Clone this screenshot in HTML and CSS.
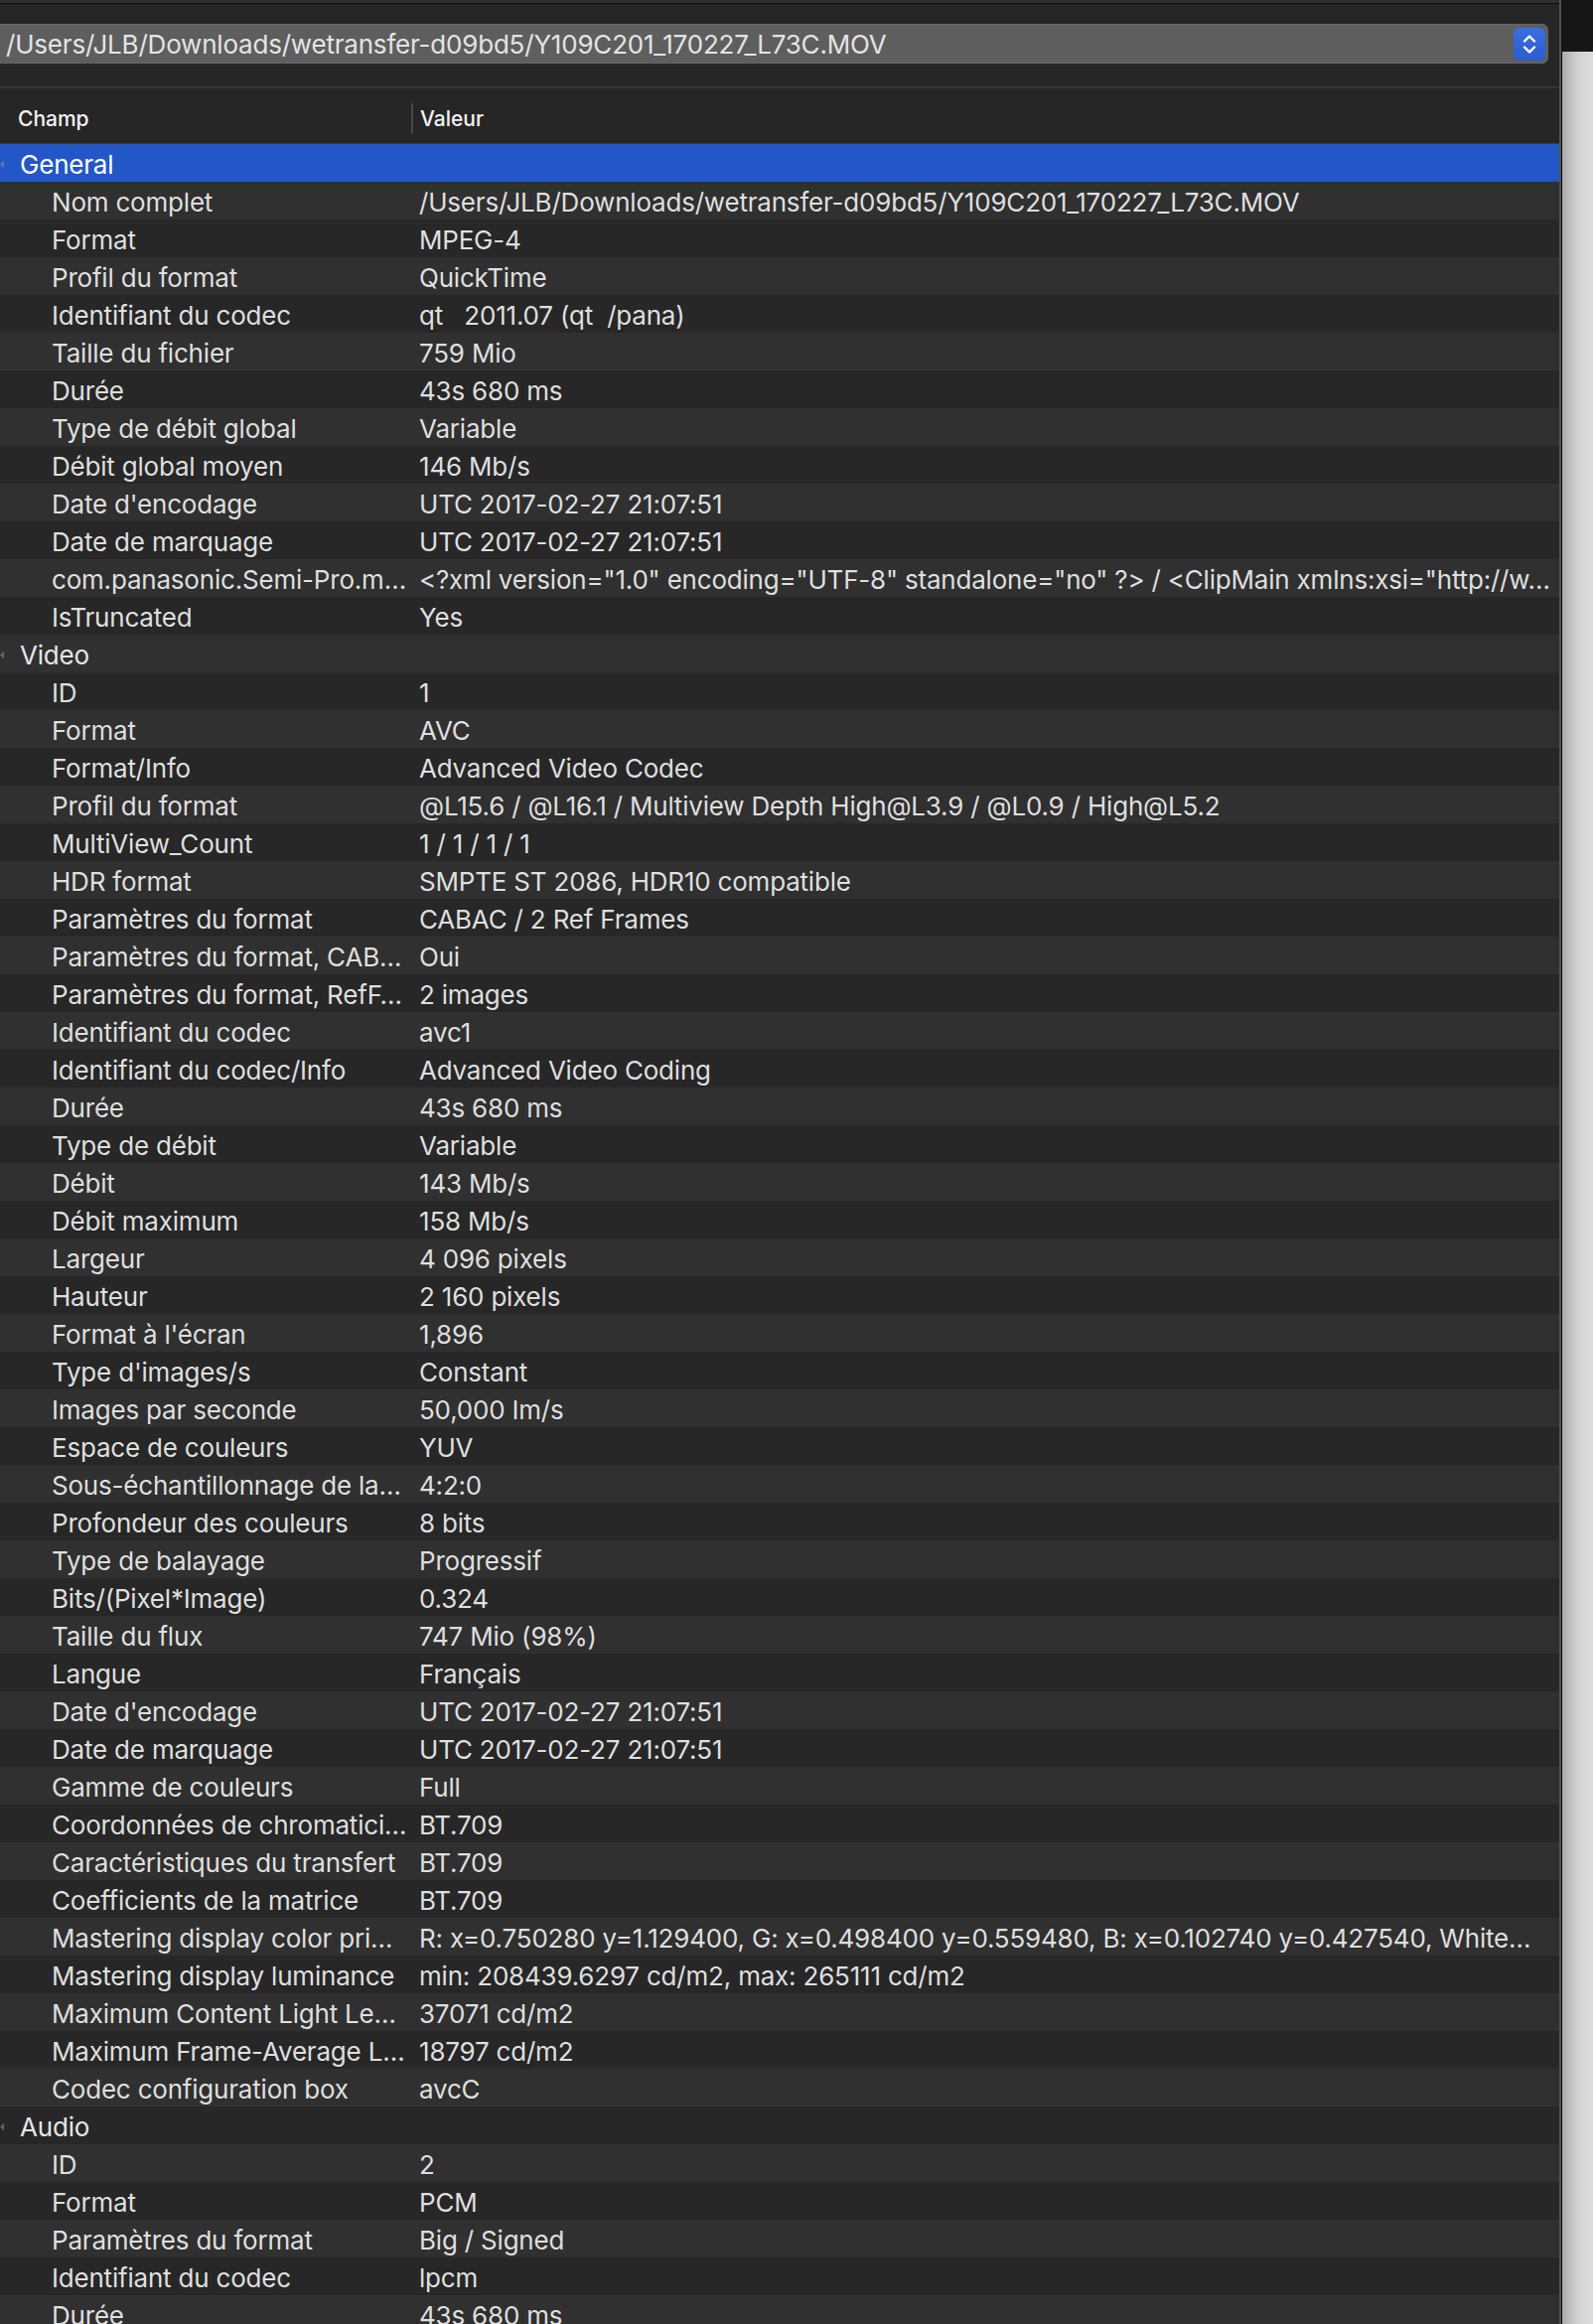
FILE: index.html
```html
<!DOCTYPE html>
<html lang="fr">
<head>
<meta charset="utf-8">
<title>MediaInfo</title>
<link rel="stylesheet" href="styles.css">
</head>
<body>
<div class="window">
  <div class="main">
    <div class="topstrip"></div>
    <div class="toolbar">
      <div class="popup">
        <span class="popup-text">/Users/JLB/Downloads/wetransfer-d09bd5/Y109C201_170227_L73C.MOV</span>
        <span class="stepper">
          <svg width="32" height="33" viewBox="0 0 32 33"><path d="M11 13.5 L16 8.5 L21 13.5" fill="none" stroke="#fff" stroke-width="2.4" stroke-linecap="round" stroke-linejoin="round"/><path d="M11 19.5 L16 24.5 L21 19.5" fill="none" stroke="#fff" stroke-width="2.4" stroke-linecap="round" stroke-linejoin="round"/></svg>
        </span>
      </div>
    </div>
    <div class="header">
      <div class="hcell hfield">Champ</div>
      <div class="hcell hvalue">Valeur</div>
    </div>
    <div class="rows">
      <div class="row group selected"><span class="tri"></span><span class="gname">General</span></div>
      <div class="row"><span class="f">Nom complet</span><span class="v">/Users/JLB/Downloads/wetransfer-d09bd5/Y109C201_170227_L73C.MOV</span></div>
      <div class="row"><span class="f">Format</span><span class="v">MPEG-4</span></div>
      <div class="row"><span class="f">Profil du format</span><span class="v">QuickTime</span></div>
      <div class="row"><span class="f">Identifiant du codec</span><span class="v">qt   2011.07 (qt  /pana)</span></div>
      <div class="row"><span class="f">Taille du fichier</span><span class="v">759 Mio</span></div>
      <div class="row"><span class="f">Durée</span><span class="v">43s 680 ms</span></div>
      <div class="row"><span class="f">Type de débit global</span><span class="v">Variable</span></div>
      <div class="row"><span class="f">Débit global moyen</span><span class="v">146 Mb/s</span></div>
      <div class="row"><span class="f">Date d'encodage</span><span class="v">UTC 2017-02-27 21:07:51</span></div>
      <div class="row"><span class="f">Date de marquage</span><span class="v">UTC 2017-02-27 21:07:51</span></div>
      <div class="row"><span class="f">com.panasonic.Semi-Pro.m…</span><span class="v">&lt;?xml version="1.0" encoding="UTF-8" standalone="no" ?&gt; / &lt;ClipMain xmlns:xsi="http://w…</span></div>
      <div class="row"><span class="f">IsTruncated</span><span class="v">Yes</span></div>
      <div class="row group"><span class="tri"></span><span class="gname">Video</span></div>
      <div class="row"><span class="f">ID</span><span class="v">1</span></div>
      <div class="row"><span class="f">Format</span><span class="v">AVC</span></div>
      <div class="row"><span class="f">Format/Info</span><span class="v">Advanced Video Codec</span></div>
      <div class="row"><span class="f">Profil du format</span><span class="v">@L15.6 / @L16.1 / Multiview Depth High@L3.9 / @L0.9 / High@L5.2</span></div>
      <div class="row"><span class="f">MultiView_Count</span><span class="v">1 / 1 / 1 / 1</span></div>
      <div class="row"><span class="f">HDR format</span><span class="v">SMPTE ST 2086, HDR10 compatible</span></div>
      <div class="row"><span class="f">Paramètres du format</span><span class="v">CABAC / 2 Ref Frames</span></div>
      <div class="row"><span class="f">Paramètres du format, CAB…</span><span class="v">Oui</span></div>
      <div class="row"><span class="f">Paramètres du format, RefF…</span><span class="v">2 images</span></div>
      <div class="row"><span class="f">Identifiant du codec</span><span class="v">avc1</span></div>
      <div class="row"><span class="f">Identifiant du codec/Info</span><span class="v">Advanced Video Coding</span></div>
      <div class="row"><span class="f">Durée</span><span class="v">43s 680 ms</span></div>
      <div class="row"><span class="f">Type de débit</span><span class="v">Variable</span></div>
      <div class="row"><span class="f">Débit</span><span class="v">143 Mb/s</span></div>
      <div class="row"><span class="f">Débit maximum</span><span class="v">158 Mb/s</span></div>
      <div class="row"><span class="f">Largeur</span><span class="v">4 096 pixels</span></div>
      <div class="row"><span class="f">Hauteur</span><span class="v">2 160 pixels</span></div>
      <div class="row"><span class="f">Format à l'écran</span><span class="v">1,896</span></div>
      <div class="row"><span class="f">Type d'images/s</span><span class="v">Constant</span></div>
      <div class="row"><span class="f">Images par seconde</span><span class="v">50,000 Im/s</span></div>
      <div class="row"><span class="f">Espace de couleurs</span><span class="v">YUV</span></div>
      <div class="row"><span class="f">Sous-échantillonnage de la…</span><span class="v">4:2:0</span></div>
      <div class="row"><span class="f">Profondeur des couleurs</span><span class="v">8 bits</span></div>
      <div class="row"><span class="f">Type de balayage</span><span class="v">Progressif</span></div>
      <div class="row"><span class="f">Bits/(Pixel*Image)</span><span class="v">0.324</span></div>
      <div class="row"><span class="f">Taille du flux</span><span class="v">747 Mio (98%)</span></div>
      <div class="row"><span class="f">Langue</span><span class="v">Français</span></div>
      <div class="row"><span class="f">Date d'encodage</span><span class="v">UTC 2017-02-27 21:07:51</span></div>
      <div class="row"><span class="f">Date de marquage</span><span class="v">UTC 2017-02-27 21:07:51</span></div>
      <div class="row"><span class="f">Gamme de couleurs</span><span class="v">Full</span></div>
      <div class="row"><span class="f">Coordonnées de chromatici…</span><span class="v">BT.709</span></div>
      <div class="row"><span class="f">Caractéristiques du transfert</span><span class="v">BT.709</span></div>
      <div class="row"><span class="f">Coefficients de la matrice</span><span class="v">BT.709</span></div>
      <div class="row"><span class="f">Mastering display color pri…</span><span class="v">R: x=0.750280 y=1.129400, G: x=0.498400 y=0.559480, B: x=0.102740 y=0.427540, White…</span></div>
      <div class="row"><span class="f">Mastering display luminance</span><span class="v">min: 208439.6297 cd/m2, max: 265111 cd/m2</span></div>
      <div class="row"><span class="f">Maximum Content Light Le…</span><span class="v">37071 cd/m2</span></div>
      <div class="row"><span class="f">Maximum Frame-Average L…</span><span class="v">18797 cd/m2</span></div>
      <div class="row"><span class="f">Codec configuration box</span><span class="v">avcC</span></div>
      <div class="row group"><span class="tri"></span><span class="gname">Audio</span></div>
      <div class="row"><span class="f">ID</span><span class="v">2</span></div>
      <div class="row"><span class="f">Format</span><span class="v">PCM</span></div>
      <div class="row"><span class="f">Paramètres du format</span><span class="v">Big / Signed</span></div>
      <div class="row"><span class="f">Identifiant du codec</span><span class="v">lpcm</span></div>
      <div class="row"><span class="f">Durée</span><span class="v">43s 680 ms</span></div>
    </div>
  </div>
  <div class="edge">
    <div class="edge-top"></div>
    <div class="edge-body"></div>
  </div>
</div>
</body>
</html>
```
FILE: styles.css
```css
html, body {
  margin: 0;
  padding: 0;
}
body {
  width: 1604px;
  height: 2340px;
  overflow: hidden;
  background: #262626;
  font-family: "Inter", "Liberation Sans", sans-serif;
  color: #dfdfdf;
}
.window {
  display: flex;
  width: 1604px;
  height: 2340px;
}
.main {
  width: 1570px;
  flex: none;
  background: #262626;
  overflow: hidden;
}
.topstrip {
  height: 3px;
  background: #2f2f2f;
  border-bottom: 1px solid #0e0e0e;
}
.toolbar {
  padding-top: 20px;
  height: 83px;
  box-sizing: border-box;
}
.popup {
  margin-left: -10px;
  width: 1569px;
  height: 40px;
  box-sizing: border-box;
  background: #5e5e5e;
  border: 1px solid #666;
  border-radius: 6px;
  display: flex;
  align-items: center;
  justify-content: space-between;
  padding: 0 2px 0 15px;
}
.popup-text {
  font-size: 26px;
  color: #e4e4e4;
  white-space: nowrap;
  letter-spacing: -0.2px;
}
.stepper {
  width: 32px;
  height: 33px;
  border-radius: 6px;
  background: linear-gradient(#3a6ee0, #2b5cd0);
  display: flex;
}
.header {
  display: grid;
  grid-template-columns: 414px 1fr;
  height: 58px;
  box-sizing: border-box;
  padding-top: 5px;
  border-top: 2px solid #353535;
  border-bottom: 1px solid #3a3a3a;
  align-items: center;
}
.hcell {
  font-size: 21px;
  font-weight: 500;
  color: #f2f2f2;
}
.hfield {
  padding-left: 18px;
}
.hvalue {
  padding-left: 7px;
  border-left: 2px solid #474747;
  height: 31px;
  line-height: 31px;
}
.rows {
  display: flex;
  flex-direction: column;
}
.row {
  display: grid;
  grid-template-columns: 414px 1fr;
  height: 38px;
  box-sizing: border-box;
  padding-top: 3px;
  align-items: center;
  font-size: 26px;
  letter-spacing: -0.2px;
  background: #272727;
}
.row:nth-child(even) {
  background: #303030;
}
.row.selected {
  background: #2357c8;
  color: #ffffff;
}
.f {
  padding-left: 52px;
  padding-right: 3px;
  white-space: nowrap;
  overflow: hidden;
  text-overflow: clip;
}
.v {
  padding-left: 8px;
  padding-right: 8px;
  white-space: pre;
  overflow: hidden;
  text-overflow: clip;
}
.group {
  grid-template-columns: 20px 1fr;
  color: #e6e6e6;
}
.group.selected {
  color: #fff;
}
.tri {
  width: 4px;
  height: 8px;
  background: #8a8a8a;
  clip-path: polygon(0 0, 100% 50%, 0 100%);
  transform: scaleX(-1);
  justify-self: start;
  opacity: 0.6;
}
.gname {
  white-space: nowrap;
}
.edge {
  flex: 1;
  display: flex;
  flex-direction: column;
  border-left: 2px solid #525252;
}
.edge-top {
  height: 52px;
  background: #161616;
}
.edge-body {
  flex: 1;
  border-left: 1px solid #0b0b0b;
  background: linear-gradient(to right, #a9a9a9, #cfcfcf 45%, #dadada 80%, #dcdcdc);
}
```
